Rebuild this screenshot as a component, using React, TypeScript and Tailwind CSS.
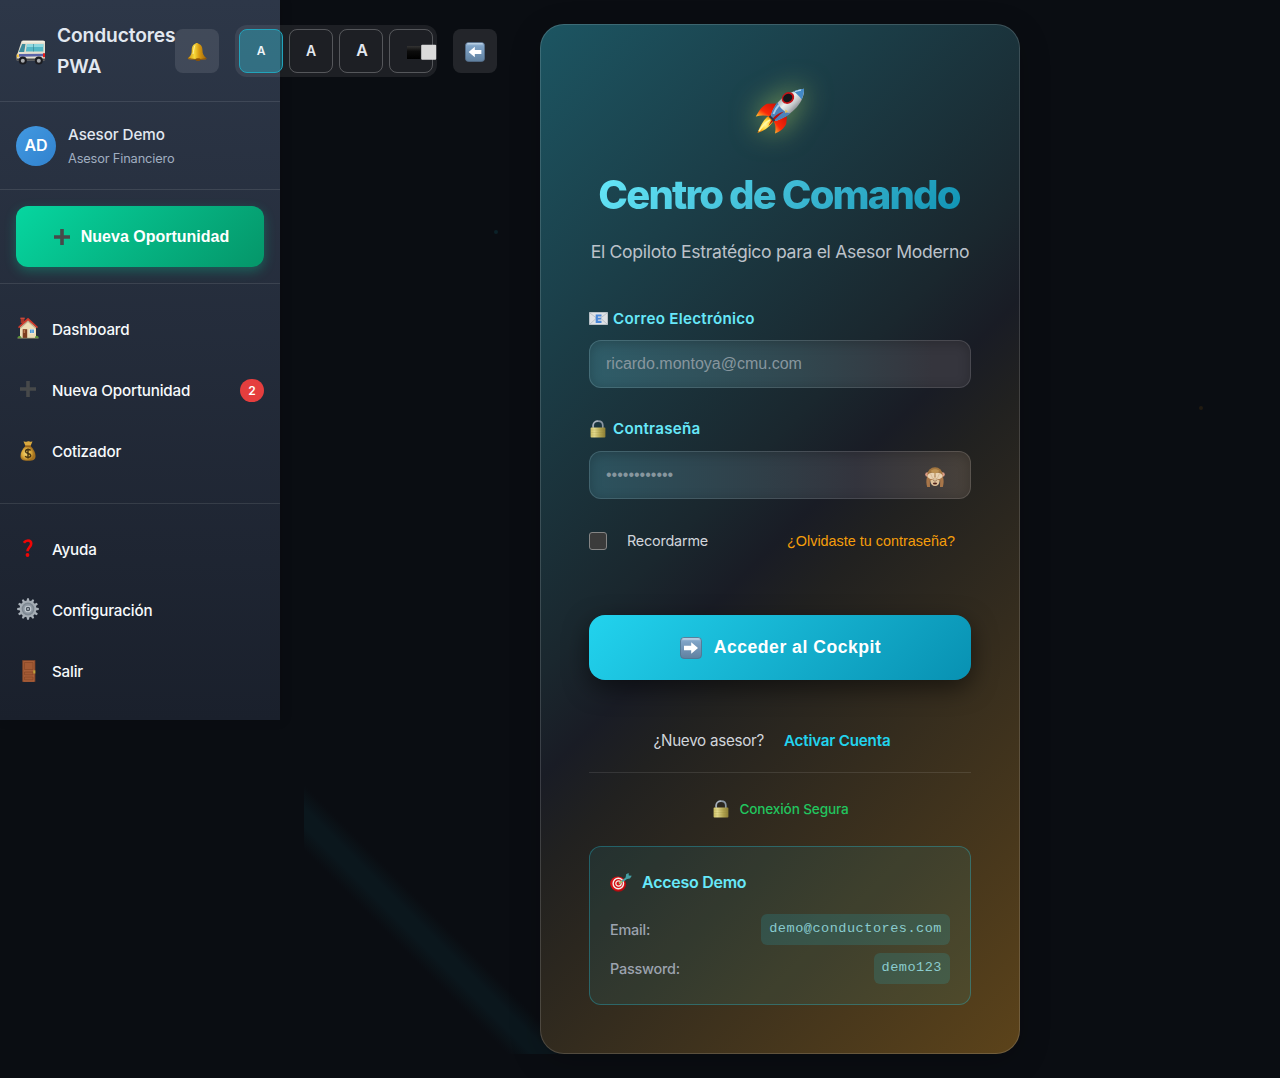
import type { ReactNode } from "react";

type IconProps = { className?: string };

function Svg({ className = "", box = "0 0 24 24", children }: IconProps & { box?: string; children: ReactNode }) {
  return (
    <svg viewBox={box} className={`block shrink-0 ${className}`} aria-hidden="true">
      {children}
    </svg>
  );
}

function VanIcon({ className }: IconProps) {
  return (
    <Svg className={className} box="0 0 30 26">
      <path d="M5.500 1.200C6 .5 6.500 .4 8 .4h19c1.500 0 2 .8 2 2V19c0 1-.6 1.600-1.600 1.600H2C1 20.600.6 20 .6 19v-3.500c0-1 .6-1.600 1.200-2.800z" fill="#e4dfcf" />
      <path d="M7 1h21c.6.2 1 .8 1 1.500H6z" fill="#f7f3e4" />
      <path d="M6.200 4h3.300l-1.300 8H2.800z" fill="#3d8c9c" />
      <path d="M11 4h16.300v7.500H9.800z" fill="#55b8c6" />
      <path d="M11 4h16.300v3H10.500z" fill="#8ed8df" />
      <path d="M17.500 4v7.500" stroke="#357d8b" strokeWidth=".6" />
      <path d="M3 14l26-.2v2.400L3 16.800z" fill="#5a63a8" />
      <path d="M27 13.200h2v4h-2z" fill="#e51a1a" />
      <path d="M.8 14.500h2v2.800h-2z" fill="#f9c22e" />
      <path d="M.4 18.500h28.800v2.200H.4z" fill="#4b4c50" />
      <circle cx="6.800" cy="20.600" r="4" fill="#1b1c20" />
      <circle cx="6.800" cy="20.800" r="2" fill="#a9abae" />
      <circle cx="22.800" cy="20.600" r="4" fill="#1b1c20" />
      <circle cx="22.800" cy="20.800" r="2" fill="#a9abae" />
    </Svg>
  );
}

function BellIcon({ className }: IconProps) {
  return (
    <Svg className={className} box="0 0 20 20">
      <defs>
        <linearGradient id="bell" x1="0" x2="1">
          <stop offset="0" stopColor="#c98d10" />
          <stop offset=".35" stopColor="#f7d83a" />
          <stop offset=".6" stopColor="#d99c12" />
          <stop offset="1" stopColor="#9c6208" />
        </linearGradient>
      </defs>
      <path d="M8.300 1.800C8.500.7 11 .6 11.500 1.800c3 .8 4 3.700 4 6.700 0 3.500 1 5 3.700 7.400.7.800.2 1.400-.8 1.500L2 17.200c-1.200 0-1.500-.8-.7-1.500C4 13.500 4.700 12 4.700 8.500c0-3 .8-5.700 3.600-6.700z" fill="url(#bell)" />
      <path d="M.9 16c4 1.800 13.500 2 18.300.3" stroke="#8a5206" strokeWidth=".8" fill="none" />
      <ellipse cx="11" cy="17.700" rx="2.500" ry="1.400" fill="#8a5206" />
      <path d="M8 3.500C6.800 5 6.800 9 6 12" stroke="#fff3a0" strokeWidth=".9" fill="none" />
    </Svg>
  );
}

function ContrastIcon({ className }: IconProps) {
  return (
    <Svg className={className} box="0 0 30 16">
      <defs>
        <linearGradient id="blk" x1="0" x2="0" y1="0" y2="1">
          <stop offset="0" stopColor="#333" />
          <stop offset=".4" stopColor="#0c0c0c" />
          <stop offset="1" stopColor="#000" />
        </linearGradient>
      </defs>
      <rect x="0" y="2" width="13.500" height="13" fill="url(#blk)" />
      <rect x="14.200" y=".8" width="15" height="15" rx="1" fill="#dadada" />
    </Svg>
  );
}

function ArrowKey({ className, left = false }: IconProps & { left?: boolean }) {
  const id = left ? "keyL" : "keyR";
  return (
    <Svg className={className} box="0 0 22 22">
      <defs>
        <linearGradient id={id} x1="0" x2="0" y1="0" y2="1">
          <stop offset="0" stopColor="#a9c3dc" />
          <stop offset=".2" stopColor="#7fa3c6" />
          <stop offset="1" stopColor="#60809f" />
        </linearGradient>
      </defs>
      <rect x=".5" y=".5" width="21" height="21" rx="3.500" fill={`url(#${id})`} stroke="#55708c" strokeWidth=".8" />
      <path d="M2.500 2h17" stroke="#c7d9ea" strokeWidth="1" />
      <g transform={left ? "translate(22 0) scale(-1 1)" : undefined}>
        <path d="M4 8.800h7.200V5.300L18 11l-6.800 5.800v-3.500H4z" fill="#fff" />
      </g>
    </Svg>
  );
}

function PlusIcon({ className }: IconProps) {
  return (
    <Svg className={className} box="0 0 16 16">
      <path d="M6.200 0h3.600v6.200H16v3.500H9.800V16H6.200V9.700H0V6.200h6.200z" fill="#47494a" />
    </Svg>
  );
}

function HouseIcon({ className }: IconProps) {
  return (
    <Svg className={className} box="0 0 22 22">
      <path d="M3.800 1h3.500v5H3.800z" fill="#a7352a" />
      <path d="M3.400.6h4.300v1.500H3.400z" fill="#c94a3b" />
      <path d="M3 10.500L11 3l8 7.500V21H3z" fill="#eddcb6" />
      <path d="M11 .8L21 10l-1 1.300L11 3.600 2 11.300 1 10z" fill="#d23a2b" />
      <path d="M11 3.600l8 6.800v1.500l-8-6.800-8 6.800v-1.500z" fill="#bba98a" />
      <path d="M5.700 12.200h4.500V21H5.700z" fill="#7d3c1f" />
      <path d="M6.600 13h1.500v3H6.600z" fill="#b9784f" />
      <path d="M12.300 12h5.200v4.500h-5.200z" fill="#f6f3ea" />
      <path d="M12.900 12.500h4v3.500h-4z" fill="#4e9ad6" />
      <path d="M14.900 12.500v3.500" stroke="#e8eef3" strokeWidth=".5" />
      <path d="M.5 21c0-2.500 3-2.800 4-.8V21zM18 21c0-3 3.500-2.800 3.700 0z" fill="#5d9a34" />
      <path d="M.5 20.800h21v.8H.5z" fill="#8c8668" />
    </Svg>
  );
}

function MoneyBagIcon({ className }: IconProps) {
  return (
    <Svg className={className} box="0 0 16 20">
      <defs>
        <radialGradient id="bag" cx=".4" cy=".5">
          <stop offset="0" stopColor="#f5d878" />
          <stop offset=".6" stopColor="#dcab3d" />
          <stop offset="1" stopColor="#a3701e" />
        </radialGradient>
      </defs>
      <path d="M3.500.5c1.500-.5 2 .7 3 .2C7.500 0 8.500 0 9.500.6c1 .5 2-.6 3 0L10.500 5h-5z" fill="#d9a93f" />
      <path d="M5.500 5h5c3 2.500 5 6.500 5 10 0 3.700-2 4.700-7.500 4.700S.5 18.700.5 15c0-3.500 2-7.500 5-10z" fill="url(#bag)" />
      <path d="M5.200 4.400h5.600v1.400H5.200z" fill="#94601b" />
      <path d="M10.600 9.500C9.800 8 5.500 8 5.500 10.500c0 2.600 5.200 1.400 5.200 4 0 2.300-4.200 2.500-5.500.6M8 7.500v10" stroke="#453313" strokeWidth="1.400" fill="none" />
    </Svg>
  );
}

function QuestionIcon({ className }: IconProps) {
  return (
    <Svg className={className} box="0 0 10 18">
      <path d="M.9 3.800C2 2 3.300 1.500 5 1.500c2.300 0 3.200 1.200 3.200 3.200 0 3-3.600 3.800-3.700 7.600" stroke="#f00505" strokeWidth="2.600" fill="none" />
      <circle cx="4.500" cy="16" r="1.900" fill="#f00505" />
    </Svg>
  );
}

function GearIcon({ className }: IconProps) {
  const teeth = [0, 30, 60, 90, 120, 150, 180, 210, 240, 270, 300, 330];
  return (
    <Svg className={className} box="0 0 22 22">
      {teeth.map((deg) => (
        <path key={deg} d="M9.500 3.500L10.100.2h1.800L12.500 3.500z" fill="#a9b1b9" transform={`rotate(${deg} 11 11)`} />
      ))}
      <circle cx="11" cy="11" r="8.400" fill="#a5adb5" />
      <circle cx="11" cy="11" r="6.400" fill="#7d8791" />
      <circle cx="11" cy="11" r="5" fill="#8f99a3" />
      <circle cx="11" cy="11" r="2.800" fill="#47515c" stroke="#c4ccd3" strokeWidth="1.100" />
      <circle cx="11" cy="11" r="1" fill="#b0b8c0" />
    </Svg>
  );
}

function DoorIcon({ className }: IconProps) {
  return (
    <Svg className={className} box="0 0 14 22">
      <rect x=".3" y=".2" width="13" height="21.600" fill="#8b4a2a" />
      <rect x="1.300" y="1" width="11" height="20.800" fill="#a85e38" />
      <path d="M2.500 2.500h8.500v7H2.500zM2.500 12h8.500v2.800H2.500zM2.500 17h8.500v2.800H2.500z" fill="#a35a34" stroke="#854626" strokeWidth=".7" />
      <rect x="11.300" y="10.300" width="2" height="3.200" fill="#c0a23a" />
    </Svg>
  );
}

function RocketIcon({ className }: IconProps) {
  return (
    <Svg className={className} box="0 0 50 46">
      <defs>
        <linearGradient id="hull" x1=".25" y1=".25" x2=".75" y2=".75">
          <stop offset="0" stopColor="#8f979f" />
          <stop offset=".4" stopColor="#eceeee" />
          <stop offset=".65" stopColor="#c4c8ca" />
          <stop offset="1" stopColor="#6c7177" />
        </linearGradient>
        <linearGradient id="fin" x1="1" y1="0" x2="0" y2="1">
          <stop offset="0" stopColor="#cf1208" />
          <stop offset=".6" stopColor="#fb2a08" />
          <stop offset="1" stopColor="#ffcf35" />
        </linearGradient>
        <radialGradient id="flame">
          <stop offset="0" stopColor="#fff8a0" />
          <stop offset=".6" stopColor="#ffd534" />
          <stop offset="1" stopColor="#f08a12" />
        </radialGradient>
      </defs>
      <path d="M21 15.500l-9 .3C7 18 4 23 .8 28.500c5-1.500 9.500-1.500 14.500 0z" fill="url(#fin)" />
      <path d="M32 28.500l-.8 7.500c-2.500 5-6.500 7.500-11.200 9.500 1-5 .5-9.500-1.500-12.500z" fill="url(#fin)" />
      <path d="M12 29c3-2.500 8 1.500 5.500 5.500C14 39.500 8.500 43 2.500 45 4.500 39 8 33 12 29z" fill="url(#flame)" />
      <path d="M4 43c4-6 7-9 11-11" stroke="#fff7a2" strokeWidth="1.600" fill="none" />
      <path d="M16 27C20 14 31 3.500 49 .8 50 13 38 27 21 33c-3-1.500-4.500-3.500-5-6z" fill="url(#hull)" />
      <path d="M16 27c1.200-5 3.600-9 6.500-12.800 2 5.500 7 10.300 13 11.300C31.500 28.500 26 31.500 21 33c-3-1.500-4.500-3.500-5-6z" fill="#4d82bb" />
      <path d="M18.500 26c1.500-4 3-6.500 5.500-9" stroke="#a5cdea" strokeWidth="2" fill="none" />
      <path d="M38.500 3.200C42 1.900 45 1.300 49 .8c.2 3.500-.8 7.200-2.300 10.700-2.600-3.700-5-5.700-8.200-8.300z" fill="#4289c7" />
      <path d="M40 3.800c2.500-1 4-1.500 6-1.700" stroke="#b4d9ef" strokeWidth="1.200" />
      <ellipse cx="33" cy="10" rx="6.600" ry="5.500" transform="rotate(-35 33 10)" fill="#c51218" />
      <ellipse cx="32.800" cy="9.800" rx="4.900" ry="4" transform="rotate(-35 33 10)" fill="#14161b" />
      <path d="M29 23.500C24 27 18 33 13.500 38c3-7 7-12 15.500-14.500z" fill="#b80e08" />
      <path d="M30.500 21.500l2.500 2-3 1.800z" fill="#e4c052" />
      <path d="M14.500 28l5 5" stroke="#26384c" strokeWidth="2.200" />
    </Svg>
  );
}

function MailIcon({ className }: IconProps) {
  return (
    <Svg className={className} box="0 0 19 13">
      <rect x=".2" y=".2" width="18.600" height="12.600" fill="#dfe2e6" />
      <path d="M.4.6l9.100 7 9.100-7M.4 12.600l6.500-6M18.600 12.600l-6.500-6" stroke="#aeb4bb" strokeWidth=".7" fill="none" />
      <path d="M6.700 2.500h5.800v2H8.900v1.200h3.300v1.800H8.900v1.300h3.600v2.100H6.700z" fill="#4a88d8" />
    </Svg>
  );
}

function LockIcon({ className }: IconProps) {
  return (
    <Svg className={className} box="0 0 16 18">
      <defs>
        <linearGradient id="brass" x1="0" x2="1">
          <stop offset="0" stopColor="#cdbf66" />
          <stop offset=".25" stopColor="#e3d98c" />
          <stop offset=".65" stopColor="#b3a551" />
          <stop offset="1" stopColor="#8c7e35" />
        </linearGradient>
      </defs>
      <path d="M3.200 9V5.500C3.200 2.700 5 1.200 8 1.200s4.800 1.500 4.800 4.300V9" stroke="#8b97a3" strokeWidth="1.700" fill="none" />
      <path d="M3 7V5C3.300 2.500 5 1 8 1" stroke="#c3ccd4" strokeWidth=".7" fill="none" />
      <rect x=".6" y="7.600" width="14.800" height="10" rx=".8" fill="url(#brass)" />
      <path d="M1 10h14M1 12.500h14M1 15h14" stroke="#8c7e35" strokeOpacity=".35" strokeWidth=".5" />
    </Svg>
  );
}

function MonkeyIcon({ className }: IconProps) {
  return (
    <Svg className={className} box="0 0 20 20">
      <circle cx="2.500" cy="7.500" r="2.300" fill="#dc9b86" />
      <circle cx="17.500" cy="7.500" r="2.300" fill="#dc9b86" />
      <ellipse cx="10" cy="8" rx="7.700" ry="7.700" fill="#a1753f" />
      <path d="M5.500 4C8 1.500 12 1.500 14.500 4l-4.500 3z" fill="#bd9152" />
      <ellipse cx="10" cy="14.500" rx="4.500" ry="4.500" fill="#dcc09a" />
      <path d="M2 10c1-3 3.500-4.500 7-4l.5 4.500C8 13 6 13 4.800 13L5 20H2.200C1.200 17 1 13 2 10zM18 10c-1-3-3.500-4.500-7-4l-.5 4.500C12 13 14 13 15.200 13L15 20h2.800c1-3 1.200-7 .2-10z" fill="#a87649" />
      <path d="M2.200 9C3.600 5.800 7 5 9.600 6.200l-.2 4.800c-2 1.800-5.500 1.500-7.200-2zM17.800 9C16.400 5.800 13 5 10.400 6.200l.2 4.800c2 1.800 5.500 1.500 7.200-2z" fill="#e8d2b2" />
      <path d="M5.500 6.500L7.500 11M14.500 6.500L12.500 11" stroke="#c6a57c" strokeWidth=".5" />
      <path d="M8.500 13.300l1 .7M11.500 13.300l-1 .7" stroke="#523620" strokeWidth=".9" />
      <ellipse cx="10" cy="16.500" rx="2.100" ry="1" fill="#50241c" />
    </Svg>
  );
}

function TargetIcon({ className }: IconProps) {
  return (
    <Svg className={className} box="0 0 22 19">
      <ellipse cx="8.400" cy="11.300" rx="7.800" ry="7.500" fill="#a90c10" />
      <ellipse cx="7.700" cy="10.500" rx="7.500" ry="7" fill="#d91418" />
      <circle cx="8.300" cy="10.500" r="5.200" fill="none" stroke="#f3f1ec" strokeWidth="1.400" />
      <circle cx="8.500" cy="10.500" r="2.700" fill="none" stroke="#f3f1ec" strokeWidth="1.200" />
      <path d="M9 10.500l8.500-6" stroke="#47a6a8" strokeWidth="2" />
      <path d="M9 10.500l3-2.100" stroke="#d1bd48" strokeWidth="1.300" />
      <path d="M15.600 4.800l.5-3.500L18.600 0l.2 2.500 3 .2-1.800 2.700-3.400.5z" fill="#45a0a5" />
    </Svg>
  );
}

const inter = "font-['Inter',sans-serif]";
const arial = "font-['Liberation_Sans',Arial,sans-serif]";

function IconSlot({ children }: { children: ReactNode }) {
  return <span className="mb-[3px] flex h-6 w-6 shrink-0 items-center justify-center">{children}</span>;
}

function NavItem({ icon, label, badge }: { icon: ReactNode; label: string; badge?: string }) {
  return (
    <a className="flex h-[61px] items-center gap-3 px-4 text-[15.200px] font-medium tracking-[-0.200px] text-[#f7fafc]">
      <IconSlot>{icon}</IconSlot>
      <span className="mt-0.5 flex-1">{label}</span>
      {badge && (
        <span className="flex h-[23px] w-6 items-center justify-center rounded-full bg-[#e53e3e] text-xs font-semibold text-white">
          {badge}
        </span>
      )}
    </a>
  );
}

function SizeButton({ className, children }: { className: string; children: ReactNode }) {
  return (
    <button className={`flex h-11 w-11 shrink-0 items-center justify-center rounded-lg border font-semibold ${className}`}>
      {children}
    </button>
  );
}

function Sidebar() {
  return (
    <aside className="relative z-10 h-[720px] w-[280px] shrink-0 bg-linear-to-b from-[#2d3748] to-[#1a202c] shadow-[2px_0_10px_rgba(0,0,0,0.15)]">
      <header className="flex h-[102px] items-center border-b border-white/10 pl-4">
        <VanIcon className="mt-[5px] h-[26px] w-[30px]" />
        <h2 className="ml-[11px] w-[118px] shrink-0 text-[19.200px] leading-[30.700px] font-semibold tracking-[-0.130px] whitespace-nowrap text-[#e2e8f0]">
          Conductores
          <br />
          PWA
        </h2>
        <div className="flex shrink-0 items-center gap-4">
          <button className="flex h-11 w-11 items-center justify-center rounded-lg bg-white/10">
            <BellIcon className="mt-0.5 h-5 w-5" />
          </button>
          <div className="flex h-[52px] w-[202px] items-center gap-1.5 rounded-xl bg-white/[0.08] p-1">
            <SizeButton className="border-[#22a3bb] bg-[#22d3ee]/30 text-xs text-[#f0f4f8]">A</SizeButton>
            <SizeButton className="border-white/25 text-sm text-[#e2e8f0]">A</SizeButton>
            <SizeButton className="border-white/25 pb-0.5 pl-0.5 text-base text-[#e2e8f0]">A</SizeButton>
            <SizeButton className="border-white/25 pl-[22px]">
              <ContrastIcon className="mt-[3px] h-4 w-[30px]" />
            </SizeButton>
          </div>
          <button className="flex h-11 w-11 items-center justify-center rounded-lg bg-white/10">
            <ArrowKey left className="mt-0.5 h-5 w-5" />
          </button>
        </div>
      </header>

      <section className="flex h-[88px] items-center gap-3 border-b border-white/10 px-4">
        <div className="flex h-10 w-10 items-center justify-center rounded-full bg-linear-135 from-[#4299e1] to-[#3182ce] pb-px text-base font-semibold tracking-[-0.200px] text-white">
          AD
        </div>
        <div className="pt-0.5">
          <div className="text-[15.200px] leading-6 font-medium tracking-[-0.080px] text-[#e2e8f0]">Asesor Demo</div>
          <div className="text-[12.800px] leading-6 tracking-[-0.150px] text-[#a0aec0]">Asesor Financiero</div>
        </div>
      </section>

      <section className="h-[94px] border-b border-white/10 px-4 pt-4">
        <button className={`flex h-[61px] w-full items-center justify-center gap-[11px] rounded-xl bg-linear-135 from-[#06d6a0] to-[#059669] pl-[3px] text-base font-bold text-white shadow-[0_4px_12px_rgba(6,214,160,0.3)] ${arial}`}>
          <PlusIcon className="h-4 w-4" />
          <span>Nueva Oportunidad</span>
        </button>
      </section>

      <nav className="h-[220px] border-b border-white/10 pt-[15px]">
        <NavItem icon={<HouseIcon className="h-[22px] w-[22px]" />} label="Dashboard" />
        <NavItem icon={<PlusIcon className="h-4 w-4" />} label="Nueva Oportunidad" badge="2" />
        <NavItem icon={<MoneyBagIcon className="mt-px h-5 w-4" />} label="Cotizador" />
      </nav>

      <nav className="pt-[15px]">
        <NavItem icon={<QuestionIcon className="h-[18px] w-2.5" />} label="Ayuda" />
        <NavItem icon={<GearIcon className="h-[22px] w-[22px]" />} label="Configuración" />
        <NavItem icon={<DoorIcon className="mt-0.5 ml-px h-[22px] w-3.5" />} label="Salir" />
      </nav>
    </aside>
  );
}

function DemoRow({ label, value }: { label: string; value: string }) {
  return (
    <div className="flex h-[31px] items-center justify-between">
      <span className="text-[14.400px] font-medium tracking-[-0.200px] text-[#9ca3af]">{label}</span>
      <code className="flex h-[31px] items-center rounded-md bg-[#22d3ee]/15 px-2 font-['Liberation_Mono',monospace] text-[13.600px] tracking-[0.480px] text-[#a5f3fc]/75">
        {value}
      </code>
    </div>
  );
}

const fieldBox =
  "flex h-12 items-center rounded-xl border border-white/10 bg-origin-border px-4 shadow-[inset_0_2px_12px_rgba(0,0,0,0.22)]";

function LoginCard() {
  return (
    <section className="relative flex h-[1030px] w-[480px] flex-col rounded-3xl border border-white/15 bg-[linear-gradient(135deg,#1c5562_0%,#1a272e_43%,#191c25_50%,#212120_56%,#5c431a_100%)] bg-origin-border px-12 shadow-[0_8px_32px_rgba(0,0,0,0.2)]">
      <RocketIcon className="mt-[63px] h-[46px] w-[50px] self-center drop-shadow-[0_0_14px_rgba(190,225,95,0.6)]" />
      <h1 className="mt-[33px] self-center bg-linear-135 from-[#67e8f9] to-[#0891b2] bg-clip-text pr-0.5 text-[40px] leading-[56px] font-extrabold tracking-[-1.850px] whitespace-nowrap text-transparent">
        Centro de Comando
      </h1>
      <p className="mt-[15px] self-center text-[17.600px] leading-7 tracking-[-0.310px] whitespace-nowrap text-[#bcc2ca]">
        El Copiloto Estratégico para el Asesor Moderno
      </p>

      <div className="mt-[41px] flex h-6 items-center gap-[5px] text-[15.200px] font-semibold tracking-[0.270px] text-[#67e8f9]">
        <MailIcon className="mb-px h-[13px] w-[19px]" />
        <span>Correo Electrónico</span>
      </div>
      <div className={`mt-[9px] bg-[linear-gradient(90deg,#2f5d69_0%,#31474f_55%,#35353d_90%)] text-base text-[#87969e] ${fieldBox} ${arial}`}>
        ricardo.montoya@cmu.com
      </div>

      <div className="mt-[29px] flex h-6 items-center gap-[7px] pl-px text-[15.200px] font-semibold tracking-[0.250px] text-[#67e8f9]">
        <LockIcon className="h-[18px] w-4" />
        <span>Contraseña</span>
      </div>
      <div className={`mt-2.5 justify-between bg-[linear-gradient(90deg,#2c535f_0%,#303f48_45%,#33343d_70%,#48413a_100%)] text-base text-[#87969e] ${fieldBox} ${arial}`}>
        <span>••••••••••••</span>
        <MonkeyIcon className="mt-1 mr-[9px] h-5 w-5" />
      </div>

      <div className="mt-[30px] flex h-6 items-center">
        <span className="h-[18px] w-[18px] rounded-[3px] border border-[#858585] bg-[#3b3b3b]" />
        <span className="ml-5 text-[14.400px] tracking-[-0.200px] text-[#d1d5db]">Recordarme</span>
        <a className={`mt-0.5 mr-4 ml-auto text-[14.400px] text-[#f59e0b] ${arial}`}>¿Olvidaste tu contraseña?</a>
      </div>

      <button className={`mt-[62px] flex h-[65px] shrink-0 items-center justify-center gap-3 rounded-2xl bg-linear-135 from-[#22d3ee] to-[#0891b2] pl-px text-[17.600px] font-bold tracking-[0.500px] text-white shadow-[0_8px_24px_rgba(0,0,0,0.5)] ${arial}`}>
        <ArrowKey className="h-[22px] w-[22px]" />
        <span>Acceder al Cockpit</span>
      </button>

      <div className="mt-12 flex h-[45px] items-start justify-center gap-5 border-b border-white/10 pr-4 text-[15.200px] leading-[26px]">
        <span className="tracking-[-0.280px] text-[#d1d5db]">¿Nuevo asesor?</span>
        <a className="font-semibold tracking-[-0.200px] text-[#22d3ee]">Activar Cuenta</a>
      </div>

      <div className="mt-6 flex h-6 items-center justify-center gap-2.5 pl-0.5 text-[13.600px] font-medium tracking-[-0.140px] text-[#22c55e]">
        <LockIcon className="h-[18px] w-4" />
        <span>Conexión Segura</span>
      </div>

      <div className="mt-[25px] h-[159px] rounded-xl border border-[#22d3ee]/30 bg-[#22d3ee]/[0.08] px-5 pt-[23px]">
        <div className="flex h-6 items-center gap-2.5 text-base font-semibold tracking-[-0.270px] text-[#67e8f9]">
          <TargetIcon className="h-[19px] w-[22px]" />
          <span>Acceso Demo</span>
        </div>
        <div className="mt-5 flex flex-col gap-2">
          <DemoRow label="Email:" value="demo@conductores.com" />
          <DemoRow label="Password:" value="demo123" />
        </div>
      </div>
    </section>
  );
}

export default function App() {
  return (
    <div className={`flex h-[1078px] w-[1280px] overflow-hidden bg-[#0a0d12] ${inter}`}>
      <Sidebar />
      <main className="relative flex flex-1 justify-center p-6">
        <div className="absolute inset-6 bg-[linear-gradient(45deg,transparent_10.300%,#0b171d_11.500%,#0b171d_12.400%,transparent_13.600%)]" />
        <span className="absolute top-[230px] left-[214px] h-1 w-1 rounded-full bg-[#22d3ee]/10" />
        <span className="absolute top-[406px] left-[919px] h-1 w-1 rounded-full bg-[#f59e0b]/10" />
        <LoginCard />
      </main>
    </div>
  );
}
